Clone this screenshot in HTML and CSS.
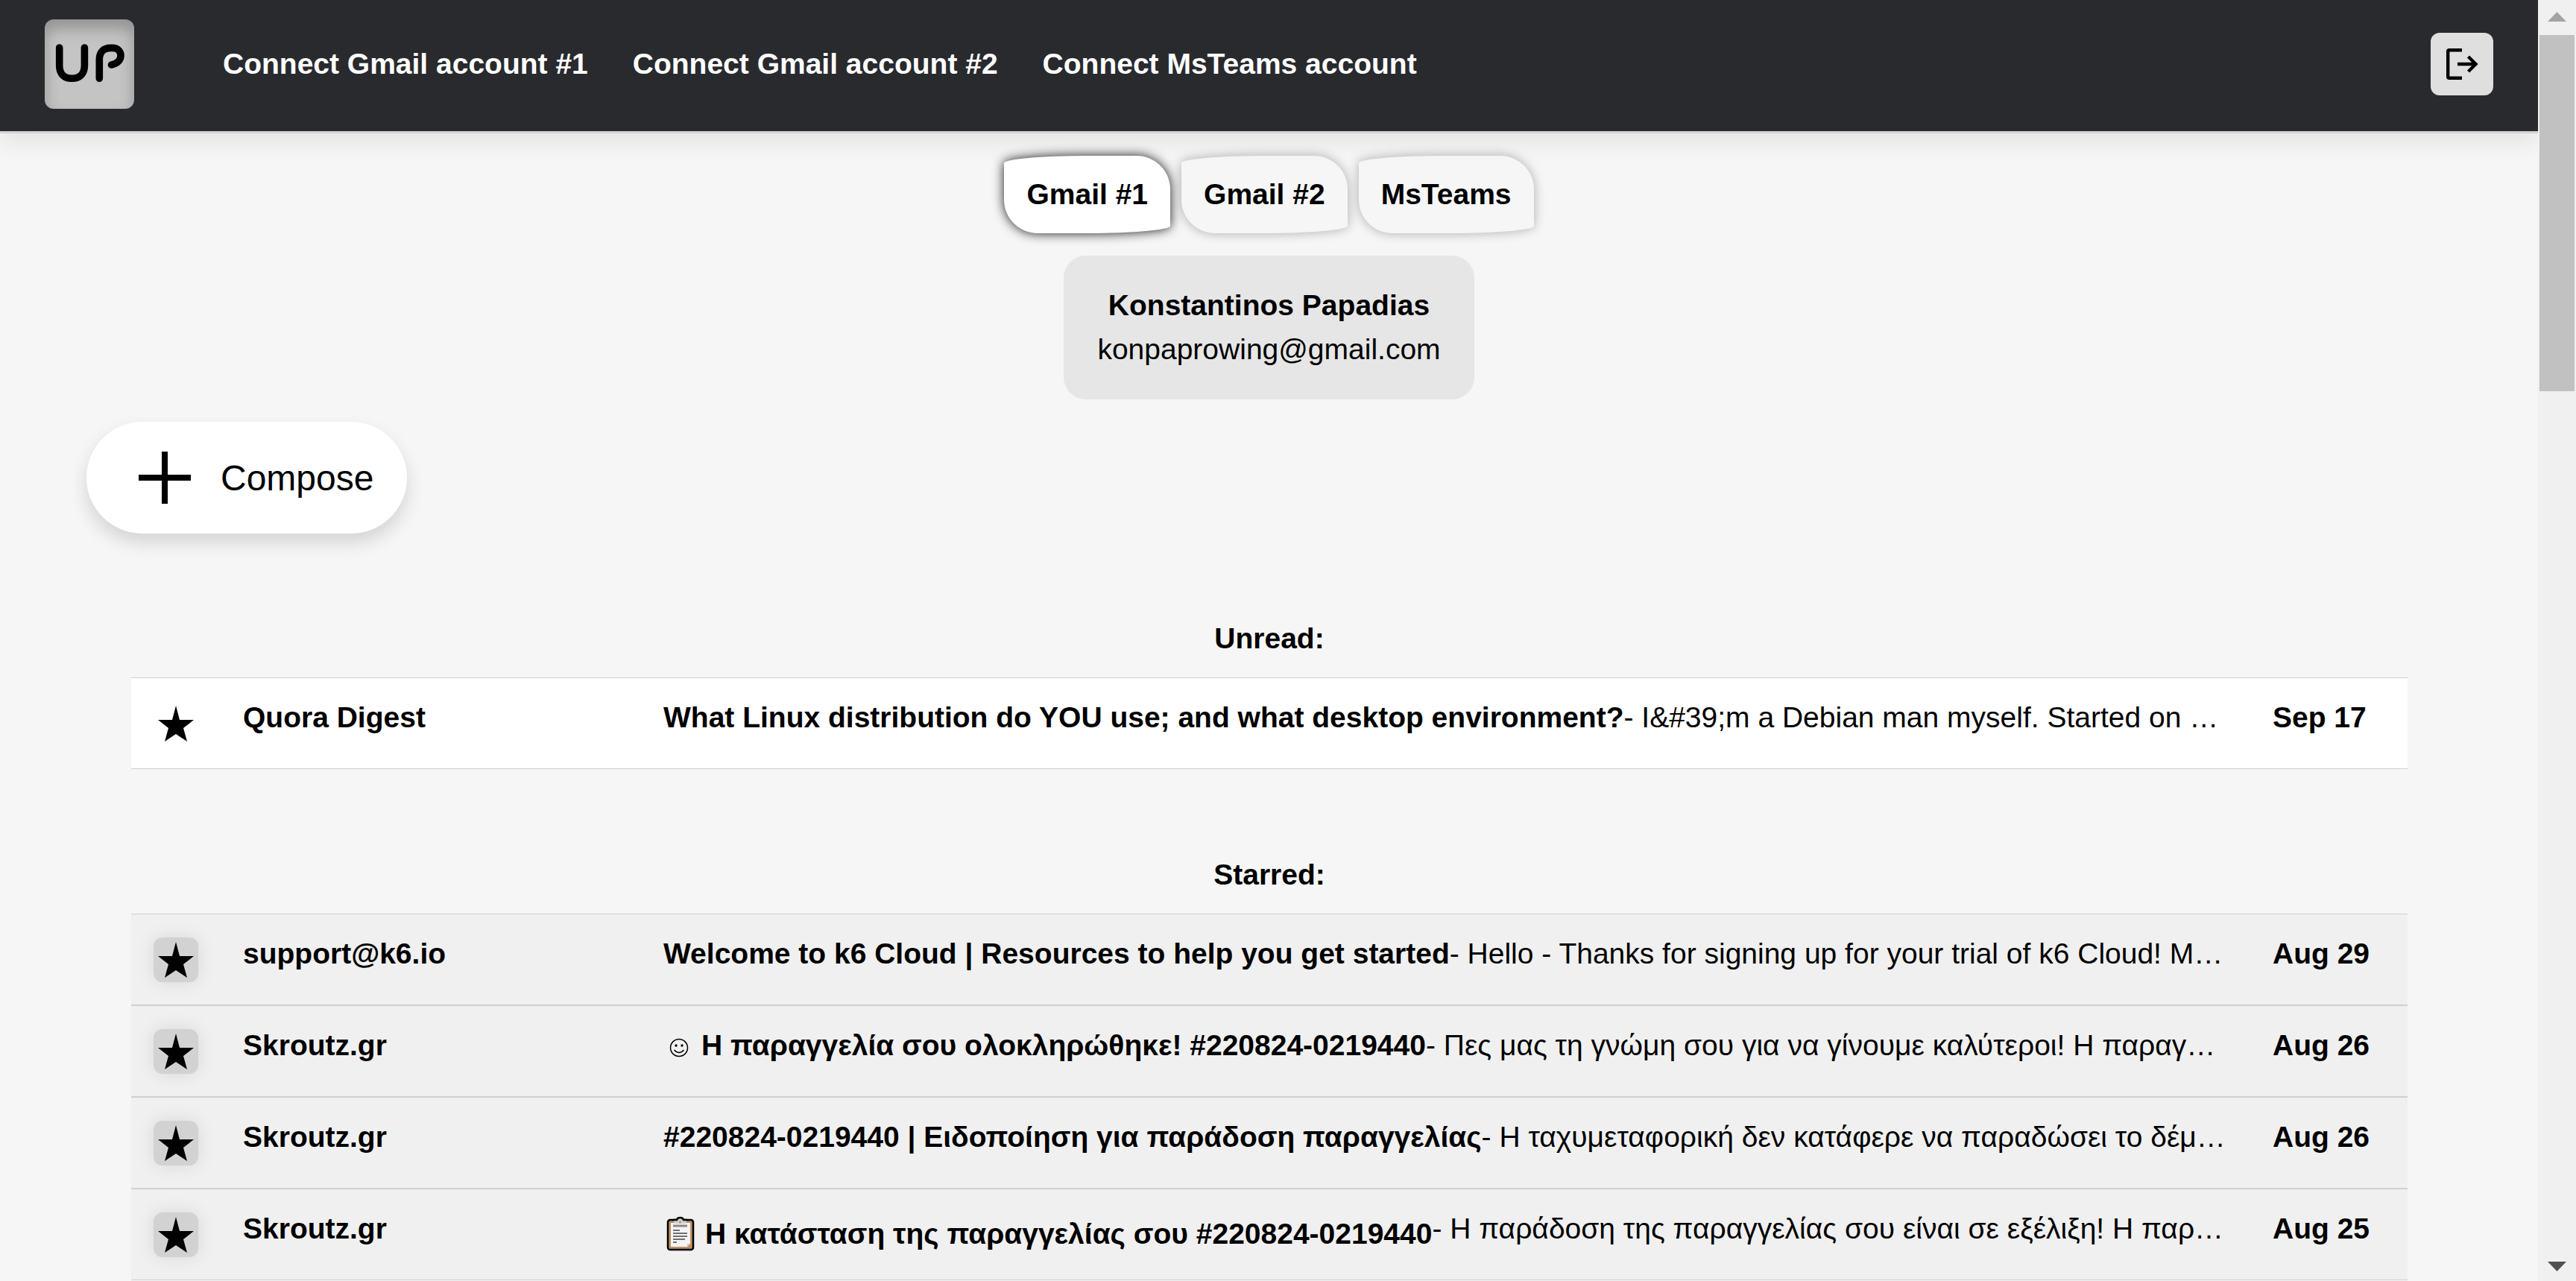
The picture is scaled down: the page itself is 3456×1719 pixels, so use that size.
FILE: index.html
```html
<!DOCTYPE html>
<html lang="en">
<head>
<meta charset="utf-8">
<title>UP</title>
<link rel="stylesheet" href="styles.css">
</head>
<body>
<svg class="symbols" aria-hidden="true">
  <symbol id="star" viewBox="0 0 60 60"><path d="M30 6 35 25H54L40 36 45 54 30 44 15 54 20 36 6 25H25Z"/></symbol>
</svg>
<div class="app">
  <header class="topbar">
    <a class="logo" href="#" aria-label="UP home">
      <svg viewBox="0 0 120 120" fill="none" stroke="#000" stroke-width="9.6" stroke-linecap="round" stroke-linejoin="round">
        <path d="M19.7 38V62C19.7 73 26 79.3 36.4 79.3S53.4 73 53.4 62V38"/>
        <path d="M73.3 79.3V54C73.3 44 79 38.4 88 38.4H91C98 38.4 102 43 102 48.5C102 55 97 59.500 89.500 61"/>
      </svg>
    </a>
    <nav class="links">
      <a href="#">Connect Gmail account #1</a>
      <a href="#">Connect Gmail account #2</a>
      <a href="#">Connect MsTeams account</a>
    </nav>
    <button class="logout" type="button" aria-label="Log out">
      <svg viewBox="0 0 84 84" fill="none" stroke="#000" stroke-width="4.4">
        <path d="M42 23.200H25Q23.200 23.200 23.200 25V59Q23.200 60.800 25 60.800H42M36 42H60M50.500 32 60.500 42 50.500 52"/>
      </svg>
    </button>
  </header>

  <main class="content">
    <div class="tabs">
      <button class="tab active" type="button">Gmail #1</button>
      <button class="tab" type="button">Gmail #2</button>
      <button class="tab" type="button">MsTeams</button>
    </div>

    <div class="account">
      <strong>Konstantinos Papadias</strong>
      <span>konpaprowing@gmail.com</span>
    </div>

    <button class="compose" type="button">
      <svg viewBox="0 0 120 120"><path d="M56 25H64V56H95V64H64V95H56V64H25V56H56Z"/></svg>
      Compose
    </button>

    <section class="mailbox">
      <h2>Unread:</h2>
      <ul>
        <li class="mail unread">
          <button class="star" type="button" aria-label="Star"><svg><use href="#star"/></svg></button>
          <span class="sender">Quora Digest</span>
          <div class="summary">
            <span class="subject">What Linux distribution do YOU use; and what desktop environment?</span>
            <span class="snippet">- I&amp;#39;m a Debian man myself. Started on …</span>
          </div>
          <time>Sep 17</time>
        </li>
      </ul>
    </section>

    <section class="mailbox">
      <h2>Starred:</h2>
      <ul>
        <li class="mail">
          <button class="star on" type="button" aria-label="Unstar"><svg><use href="#star"/></svg></button>
          <span class="sender">support@k6.io</span>
          <div class="summary">
            <span class="subject">Welcome to k6 Cloud | Resources to help you get started</span>
            <span class="snippet">- Hello - Thanks for signing up for your trial of k6 Cloud! M…</span>
          </div>
          <time>Aug 29</time>
        </li>
        <li class="mail">
          <button class="star on" type="button" aria-label="Unstar"><svg><use href="#star"/></svg></button>
          <span class="sender">Skroutz.gr</span>
          <div class="summary">
            <span class="subject">
              <svg class="smiley" viewBox="0 0 40 43" role="img" aria-label="Smile">
                <circle cx="21" cy="25" r="11.500" fill="none" stroke="#000" stroke-width="1.500"/>
                <circle cx="17" cy="22" r="1.700"/><circle cx="25" cy="22" r="1.700"/>
                <path d="M14.500 28Q21 35 27.500 28" fill="none" stroke="#000" stroke-width="1.500"/>
              </svg>
              <span>Η παραγγελία σου ολοκληρώθηκε! #220824-0219440</span>
            </span>
            <span class="snippet">- Πες μας τη γνώμη σου για να γίνουμε καλύτεροι! Η παραγ…</span>
          </div>
          <time>Aug 26</time>
        </li>
        <li class="mail">
          <button class="star on" type="button" aria-label="Unstar"><svg><use href="#star"/></svg></button>
          <span class="sender">Skroutz.gr</span>
          <div class="summary">
            <span class="subject">#220824-0219440 | Ειδοποίηση για παράδοση παραγγελίας</span>
            <span class="snippet">- Η ταχυμεταφορική δεν κατάφερε να παραδώσει το δέμ…</span>
          </div>
          <time>Aug 26</time>
        </li>
        <li class="mail">
          <button class="star on" type="button" aria-label="Unstar"><svg><use href="#star"/></svg></button>
          <span class="sender">Skroutz.gr</span>
          <div class="summary">
            <span class="subject">
              <svg class="clipboard" viewBox="0 0 45 57" role="img" aria-label="Clipboard">
                <rect x="6" y="10" width="34" height="40" rx="3" fill="#bf8f60" stroke="#000" stroke-width="2.500"/>
                <path d="M10 14H36V42L32 46H10Z" fill="#f4f4f4"/>
                <path d="M36 42H32V46Z" fill="#c8c8c8"/>
                <path d="M14 15V11H18Q18 7.500 22.500 7.500T27 11H31V15Z" fill="#d0d0d0"/>
                <path d="M13 10H18Q18.500 7 22.500 7T27 10H32" fill="none" stroke="#000" stroke-width="2.500"/>
                <circle cx="22.500" cy="13" r="1.500" fill="#bf8f60"/>
                <path d="M13 18H32" stroke="#888" stroke-width="3"/>
                <path d="M13 24H22M13 28H32M13 32H32M13 36H29M13 40H18" stroke="#444" stroke-width="1.500"/>
              </svg>
              <span>Η κατάσταση της παραγγελίας σου #220824-0219440</span>
            </span>
            <span class="snippet">- Η παράδοση της παραγγελίας σου είναι σε εξέλιξη! Η παρ…</span>
          </div>
          <time>Aug 25</time>
        </li>
      </ul>
    </section>
  </main>
</div>

<div class="scrollbar" aria-hidden="true">
  <svg class="arrow" viewBox="0 0 47 47"><path d="M11 29 23.500 16 36 29Z" fill="#a3a3a3"/></svg>
  <div class="thumb"></div>
  <svg class="arrow" viewBox="0 0 47 47"><path d="M11 21H36L23.500 34Z" fill="#505050"/></svg>
</div>
</body>
</html>
```
FILE: styles.css
```css
* { box-sizing: border-box; }

body {
  display: flex;
  height: 100vh;
  margin: 0;
  overflow: hidden;
  background: #f6f6f6;
  color: #000;
  font: 39px/43px "Liberation Sans", Arial, sans-serif;
}

button {
  border: 0;
  padding: 0;
  color: inherit;
  font: inherit;
  cursor: pointer;
}

svg { display: block; flex: none; }
.symbols { display: none; }

.app {
  flex: 1;
  min-width: 0;
  overflow: hidden;
}

/* Top bar */
.topbar {
  position: relative;
  display: flex;
  align-items: center;
  padding: 26px 60px 30px;
  background: #292a2e;
  border-bottom: 3px solid #d3d3d3;
  box-shadow: 0 12px 30px rgba(0, 0, 0, 0.08);
}

.logo {
  width: 120px;
  height: 120px;
  border-radius: 12px;
  background: #c4c4c4;
  box-shadow: inset 0 12px 20px rgba(0, 0, 0, 0.26);
}

.links {
  display: flex;
  gap: 60px;
  margin-left: 119px;
  padding-bottom: 2px;
}

.links a {
  color: #fff;
  font-weight: bold;
  text-decoration: none;
}

.logout {
  width: 84px;
  height: 84px;
  margin-left: auto;
  border-radius: 12px;
  background: #dfdfdf;
}

/* Account switcher */
.content {
  display: flex;
  flex-direction: column;
  padding-top: 30px;
}

.tabs {
  display: flex;
  justify-content: center;
  gap: 15px;
}

.tab {
  padding: 30px;
  border-radius: 110px 45px 110px 45px / 10px 45px 10px 45px;
  background: #f6f6f6;
  box-shadow: 0 0 15px rgba(0, 0, 0, 0.3);
  font-weight: bold;
  line-height: 44px;
}

.tab.active {
  background: #fff;
  box-shadow: 0 0 15px rgba(0, 0, 0, 0.9);
}

.account {
  display: flex;
  flex-direction: column;
  align-self: center;
  margin: 30px 0;
  padding: 37px 45px 38px;
  border-radius: 30px;
  background: #e6e6e6;
  line-height: 59px;
  text-align: center;
}

.compose {
  display: flex;
  align-items: center;
  align-self: flex-start;
  gap: 15px;
  height: 150px;
  margin-left: 116px;
  padding: 0 45px;
  border-radius: 75px;
  background: #fff;
  box-shadow: 0 12px 24px rgba(0, 0, 0, 0.14);
  font-size: 48px;
}

.compose svg {
  width: 120px;
  height: 120px;
}

/* Mail lists */
.mailbox {
  margin: 0 175px 0 176px;
  padding-top: 118px;
}

.mailbox + .mailbox { margin-top: 1px; }

.mailbox h2 {
  margin: 0 0 30px;
  font-size: 39px;
  line-height: 45px;
  text-align: center;
}

.mailbox ul {
  margin: 0;
  padding: 0;
  list-style: none;
}

.mail {
  display: grid;
  grid-template-columns: 150px 564px minmax(0, 1fr) 181px;
  align-items: start;
  padding: 31px 0 30px;
  border: solid #cfcfcf;
  border-width: 1px 0;
  background: #f0f0f0;
  white-space: nowrap;
}

.mail.unread { background: #fff; }

.star {
  width: 60px;
  height: 60px;
  margin-left: 30px;
  border-radius: 12px;
  background: transparent;
}

.star.on {
  background: #d2d2d2;
  box-shadow: 0 0 24px rgba(0, 0, 0, 0.1);
}

.star svg {
  width: 60px;
  height: 60px;
}

.sender,
.subject,
.mail time {
  font-weight: bold;
}

.summary {
  display: flex;
  align-items: flex-start;
  height: 60px;
  margin-right: 45px;
}

.subject {
  display: flex;
  flex: none;
  align-items: center;
  gap: 11px;
}

.smiley { width: 40px; height: 43px; }
.clipboard { width: 45px; height: 57px; }

.snippet {
  min-width: 0;
  overflow: hidden;
  text-overflow: ellipsis;
}

/* Scroll bar */
.scrollbar {
  display: flex;
  flex: none;
  flex-direction: column;
  width: 51px;
  padding: 0 2px;
  background: #f0f0f0;
}

.arrow {
  width: 47px;
  height: 47px;
}

.arrow:last-child { margin-top: auto; }

.thumb {
  height: 478px;
  background: #c1c1c1;
}
```
